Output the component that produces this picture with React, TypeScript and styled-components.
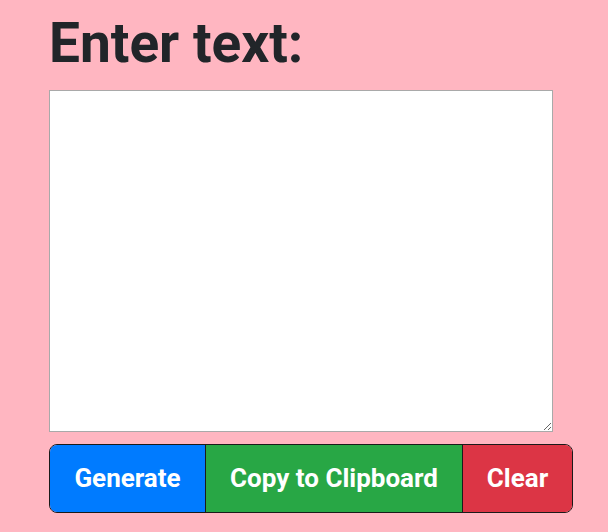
import React, { useState } from "react";
import styled, { createGlobalStyle } from "styled-components";

const GlobalStyle = createGlobalStyle`
  html, body {
    margin: 0;
    padding: 0;
    background: #ffb6c1;
  }
  body {
    font-family: Roboto, "Noto Sans", sans-serif;
  }
`;

const Page = styled.div`
  display: flex;
  flex-direction: column;
  align-items: flex-start;
  padding: 10px 35px 0 49px;
`;

const Heading = styled.h1`
  margin: 0 0 14px;
  font-family: Roboto, sans-serif;
  font-weight: 700;
  font-size: 55px;
  line-height: 66px;
  color: #212529;
`;

const TextArea = styled.textarea`
  box-sizing: border-box;
  width: 504px;
  height: 342px;
  margin: 0;
  padding: 4px;
  border: 1px solid #a9a9a9;
  background: #ffffff;
  font-family: Roboto, sans-serif;
  font-size: 16px;
  resize: both;
  outline: none;
`;

const ButtonGroup = styled.div`
  display: flex;
  margin-top: 12px;
  width: 524px;
  box-sizing: border-box;
  border: 1px solid #1a1a1a;
  border-radius: 8px;
  overflow: hidden;
`;

const Button = styled.button<{ $bg: string; $width: number }>`
  flex: 0 0 ${(p) => p.$width}px;
  box-sizing: border-box;
  margin: 0;
  padding: 13px 0;
  border: none;
  border-left: 1px solid #1a1a1a;
  background: ${(p) => p.$bg};
  color: #ffffff;
  font-family: Roboto, sans-serif;
  font-weight: 700;
  font-size: 26px;
  line-height: 41px;
  text-align: center;
  white-space: nowrap;
  cursor: pointer;
  &:first-child {
    border-left: none;
  }
`;

export default function App() {
  const [text, setText] = useState("");
  return (
    <Page>
      <GlobalStyle />
      <Heading>Enter text:</Heading>
      <TextArea value={text} onChange={(e) => setText(e.target.value)} />
      <ButtonGroup>
        <Button $bg="#007bff" $width={155}>Generate</Button>
        <Button $bg="#28a745" $width={257}>Copy to Clipboard</Button>
        <Button $bg="#dc3545" $width={110} onClick={() => setText("")}>Clear</Button>
      </ButtonGroup>
    </Page>
  );
}
